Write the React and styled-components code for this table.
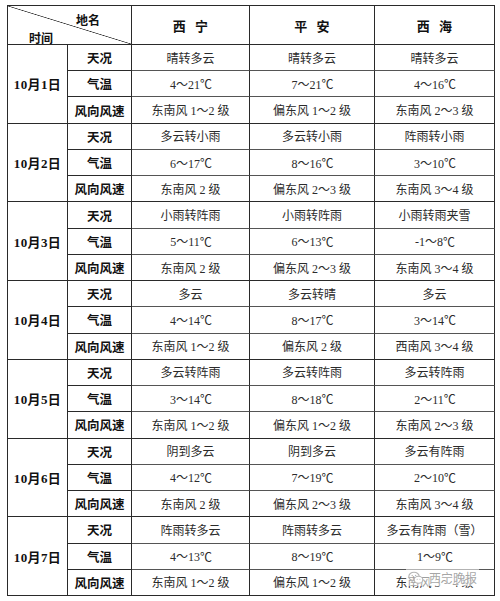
import React from 'react'
import styled, { createGlobalStyle } from 'styled-components'

const GlobalStyle = createGlobalStyle`
  html, body {
    margin: 0;
    padding: 0;
    background: #fff;
  }
  body {
    font-family: "Liberation Serif", "Noto Sans CJK SC", serif;
    color: #222;
  }
`

const Page = styled.div`
  width: 500px;
  height: 601px;
  padding: 5px 0 0 7px;
  box-sizing: border-box;
  position: relative;
`

const Grid = styled.div`
  display: grid;
  grid-template-columns: 60px 64px 118px 125px 120px;
  grid-template-rows: 39px repeat(21, 1fr);
  width: 488px;
  height: 591px;
  box-sizing: border-box;
  border-top: 1px solid #2a2a2a;
  border-left: 1px solid #2a2a2a;
`

const Cell = styled.div`
  box-sizing: border-box;
  border-right: 1px solid #2a2a2a;
  border-bottom: 1px solid ${(p) => (p.$soft ? '#555' : '#2a2a2a')};
  display: flex;
  align-items: center;
  justify-content: center;
  font-size: ${(p) => (p.$bold ? '12.5px' : '12px')};
  font-weight: ${(p) => (p.$bold ? 700 : 400)};
  color: ${(p) => (p.$bold ? '#111' : '#2b2b2b')};
  white-space: pre;
  grid-row: ${(p) => (p.$span ? `span ${p.$span}` : 'auto')};
  grid-column: ${(p) => p.$col || 'auto'};
`

const Corner = styled.div`
  grid-column: span 2;
  box-sizing: border-box;
  border-right: 1px solid #2a2a2a;
  border-bottom: 1px solid #2a2a2a;
  background: linear-gradient(
    to top right,
    transparent calc(50% - 0.7px),
    #333 50%,
    transparent calc(50% + 0.7px)
  );
  display: flex;
  flex-direction: column;
  justify-content: space-between;
  padding: 5px 31px 4px 21px;
  font-size: 12px;
  font-weight: 700;
  color: #111;
`

const CornerTop = styled.span`
  align-self: flex-end;
`

const CornerBottom = styled.span`
  align-self: flex-start;
`

const Place = styled(Cell)`
  font-size: 13px;
  word-spacing: 6px;
`

const DateCell = styled(Cell)`
  font-size: 13px;
  letter-spacing: 0.4px;
`

const Celsius = styled.span`
  font-family: "Noto Sans CJK SC", sans-serif;
  font-size: 12px;
  letter-spacing: -1px;
`

const Watermark = styled.div`
  position: absolute;
  left: 406px;
  top: 569px;
  display: flex;
  align-items: center;
  gap: 5px;
  font-family: "Noto Sans CJK SC", sans-serif;
  font-size: 12px;
  color: rgba(150, 150, 150, 0.85);
  text-shadow: 0 0 2px #fff, 0 0 2px #fff;
  background: rgba(255, 255, 255, 0.55);
  padding: 0 2px;
`

const WeChat = () => (
  <svg width="16" height="14" viewBox="0 0 16 14">
    <ellipse cx="6" cy="5.5" rx="5.2" ry="4.3" fill="none" stroke="#b5b5b5" strokeWidth="1.1" />
    <ellipse cx="10.5" cy="8.8" rx="4.3" ry="3.5" fill="#fff" stroke="#b5b5b5" strokeWidth="1.1" />
    <circle cx="4.2" cy="4.4" r="0.7" fill="#b5b5b5" />
    <circle cx="7.6" cy="4.4" r="0.7" fill="#b5b5b5" />
    <circle cx="9.2" cy="8.3" r="0.55" fill="#b5b5b5" />
    <circle cx="11.9" cy="8.3" r="0.55" fill="#b5b5b5" />
  </svg>
)

const places = ['西 宁', '平 安', '西 海']
const labels = ['天况', '气温', '风向风速']

const days = [
  {
    date: '10月1日',
    data: [
      ['晴转多云', '4～21', '东南风 1～2 级'],
      ['晴转多云', '7～21', '偏东风 1～2 级'],
      ['晴转多云', '4～16', '东南风 2～3 级'],
    ],
  },
  {
    date: '10月2日',
    data: [
      ['多云转小雨', '6～17', '东南风 2 级'],
      ['多云转小雨', '8～16', '偏东风 2～3 级'],
      ['阵雨转小雨', '3～10', '东南风 3～4 级'],
    ],
  },
  {
    date: '10月3日',
    data: [
      ['小雨转阵雨', '5～11', '东南风 2 级'],
      ['小雨转阵雨', '6～13', '偏东风 2～3 级'],
      ['小雨转雨夹雪', '-1～8', '东南风 3～4 级'],
    ],
  },
  {
    date: '10月4日',
    data: [
      ['多云', '4～14', '东南风 1～2 级'],
      ['多云转晴', '8～17', '偏东风 2 级'],
      ['多云', '3～14', '西南风 3～4 级'],
    ],
  },
  {
    date: '10月5日',
    data: [
      ['多云转阵雨', '3～14', '东南风 1～2 级'],
      ['多云转阵雨', '8～18', '偏东风 1～2 级'],
      ['多云转阵雨', '2～11', '东南风 2～3 级'],
    ],
  },
  {
    date: '10月6日',
    data: [
      ['阴到多云', '4～12', '东南风 2 级'],
      ['阴到多云', '7～19', '偏东风 2～3 级'],
      ['多云有阵雨', '2～10', '东南风 3～4 级'],
    ],
  },
  {
    date: '10月7日',
    data: [
      ['阵雨转多云', '4～13', '东南风 1～2 级'],
      ['阵雨转多云', '8～19', '偏东风 1～2 级'],
      ['多云有阵雨（雪）', '1～9', '东南风 3～4 级'],
    ],
  },
]

export default function App() {
  return (
    <>
      <GlobalStyle />
      <Page>
        <Grid>
          <Corner>
            <CornerTop>地名</CornerTop>
            <CornerBottom>时间</CornerBottom>
          </Corner>
          {places.map((p) => (
            <Place key={p} $bold>{p}</Place>
          ))}
          {days.map((day) => (
            <React.Fragment key={day.date}>
              <DateCell $bold $span={3}>{day.date}</DateCell>
              {labels.map((label, i) => (
                <React.Fragment key={label}>
                  <Cell $bold $col={2}>{label}</Cell>
                  {day.data.map((place, j) => (
                    <Cell key={j} $soft={i < 2}>
                      {place[i]}
                      {i === 1 && <Celsius>℃</Celsius>}
                    </Cell>
                  ))}
                </React.Fragment>
              ))}
            </React.Fragment>
          ))}
        </Grid>
        <Watermark>
          <WeChat />
          <span>西宁晚报</span>
        </Watermark>
      </Page>
    </>
  )
}
